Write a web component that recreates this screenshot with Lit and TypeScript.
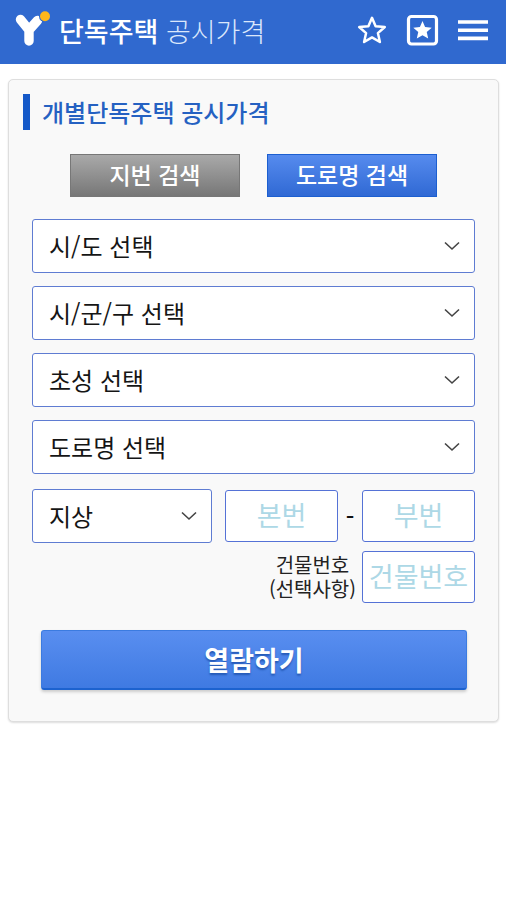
import { LitElement, html, css, svg } from "lit";
import { customElement, property } from "lit/decorators.js";

const STAR = "M15 2.8 L18.6 11.2 L27.8 12 L20.9 18.1 L22.9 27 L15 22.4 L7.1 27 L9.1 18.1 L2.2 12 L11.4 11.2 Z";

@customElement("select-box")
class SelectBox extends LitElement {
  @property() name = "";
  @property() text = "";

  static styles = css`
    :host {
      display: block;
      position: relative;
    }
    .field {
      display: block;
      box-sizing: border-box;
      width: 100%;
      height: 54px;
      margin: 0;
      padding: 0 48px 2px 16px;
      border: 1px solid #5f7cd2;
      border-radius: 3px;
      background: #fff;
      color: #151515;
      font: 400 24px "Noto Sans CJK KR", sans-serif;
      appearance: none;
    }
    .arrow {
      position: absolute;
      right: 15px;
      top: 22px;
      width: 16px;
      height: 10px;
      pointer-events: none;
    }
  `;

  render() {
    return html`
      <select class="field" aria-label=${this.name}>
        <option>${this.text}</option>
      </select>
      <svg class="arrow" viewBox="0 0 16 10" fill="none" stroke="#444" stroke-width="1.6">
        <path d="M1 1.5 L8 8 L15 1.5" />
      </svg>
    `;
  }
}

@customElement("app-root")
class AppRoot extends LitElement {
  static styles = css`
    :host {
      display: block;
      min-height: 100vh;
      background: #fff;
      font-family: "Noto Sans CJK KR", sans-serif;
    }
    .bar {
      display: flex;
      align-items: center;
      box-sizing: border-box;
      height: 64px;
      padding: 0 15px 2px;
      background: #3069cf;
      color: #fff;
    }
    .logo {
      width: 36px;
      height: 40px;
      margin-right: 8px;
    }
    .brand {
      flex: 1;
      margin: 0;
      font-size: 27px;
      line-height: 40px;
      font-weight: 500;
      white-space: nowrap;
    }
    .light {
      font-weight: 300;
      color: #dbe7fb;
    }
    .actions {
      display: flex;
      gap: 16px;
    }
    .icon {
      width: 35px;
      height: 34px;
      padding: 0;
      border: 0;
      background: none;
      color: #fff;
    }
    .icon svg {
      display: block;
      width: 34px;
      height: 34px;
    }
    .card {
      margin: 15px 7px 0 8px;
      padding: 14px 23px 31px;
      border: 1px solid #dedede;
      border-radius: 5px;
      background: #f9f9f9;
      box-shadow: 0 1px 2px #ddd;
    }
    .title {
      display: flex;
      align-items: center;
      margin: 0 0 24px -9px;
      color: #2561c2;
      font-size: 24px;
      font-weight: 500;
      line-height: 36px;
      white-space: nowrap;
    }
    .title::before {
      content: "";
      width: 7px;
      height: 36px;
      margin-right: 12px;
      background: #1559c8;
    }
    .tabs {
      display: flex;
      gap: 27px;
      margin: 0 38px 22px;
    }
    .tab {
      flex: 1;
      height: 43px;
      padding: 0 0 3px;
      border: 1px solid #777;
      background: linear-gradient(#a9a9a9, #777);
      color: #fff;
      font: 500 23px "Noto Sans CJK KR", sans-serif;
      white-space: nowrap;
    }
    .tab.on {
      border-color: #1c5fd0;
      background: linear-gradient(#568bee, #3069d4);
    }
    .selects {
      display: grid;
      gap: 13px;
      margin-bottom: 15px;
    }
    .numbers {
      display: grid;
      grid-template-columns: 180fr 13px 113fr 24px 113fr;
      row-gap: 8px;
      align-items: center;
    }
    .main {
      grid-column: 3;
    }
    .dash {
      text-align: center;
      font-size: 24px;
      font-weight: 500;
      line-height: 32px;
      color: #111;
    }
    .note {
      grid-column: 1 / 5;
      justify-self: end;
      margin-right: 6px;
      color: #222;
      font-size: 20px;
      line-height: 24px;
      text-align: center;
    }
    .num {
      box-sizing: border-box;
      width: 100%;
      min-width: 0;
      height: 52px;
      margin: 0;
      padding: 0 0 3px;
      border: 1px solid #5572d6;
      border-radius: 3px;
      background: #fff;
      color: #151515;
      font: 400 27px "Noto Sans CJK KR", sans-serif;
      text-align: center;
    }
    .num::placeholder {
      color: #add8e6;
      opacity: 1;
    }
    .submit {
      display: block;
      width: calc(100% - 17px);
      height: 60px;
      margin: 27px 8px 0 9px;
      padding: 0;
      border: 1px solid #3b7be0;
      border-bottom: 2px solid #1c62cf;
      border-radius: 3px;
      background: linear-gradient(#598ef0, #3f7ae2);
      box-shadow: 0 2px 3px #ccc;
      color: #fff;
      font: 700 27px "Noto Sans CJK KR", sans-serif;
      text-shadow: 0 2px 2px #2459b5;
    }
  `;

  private choices = ["시/도", "시/군/구", "초성", "도로명"];

  render() {
    const star = svg`<path d=${STAR} />`;
    return html`
      <header class="bar" lang="ko">
        <svg class="logo" viewBox="0 0 36 40" fill="none" stroke="#fff" stroke-linecap="round" stroke-linejoin="round">
          <path d="M5.5 8.5 L14 19 L22.5 9.5 M14 18 V30" stroke-width="9.4" />
          <circle cx="30" cy="5.2" r="6" fill="#3069cf" stroke="none" />
          <circle cx="30" cy="5.2" r="5" fill="#fdb71c" stroke="none" />
        </svg>
        <h1 class="brand">단독주택 <span class="light">공시가격</span></h1>
        <div class="actions">
          <button class="icon" aria-label="즐겨찾기">
            <svg viewBox="0 0 34 34" fill="none" stroke="currentColor" stroke-width="2.5" stroke-linejoin="round">
              <g transform="translate(3 1)">${star}</g>
            </svg>
          </button>
          <button class="icon" aria-label="즐겨찾기 목록">
            <svg viewBox="0 0 34 34" fill="currentColor">
              <rect x="3.5" y="2.5" width="28" height="27.5" rx="3" fill="none" stroke="currentColor" stroke-width="3.2" />
              <g transform="translate(6.7 5) scale(.72)">${star}</g>
            </svg>
          </button>
          <button class="icon" aria-label="메뉴">
            <svg viewBox="0 0 34 34" stroke="currentColor" stroke-width="3.6">
              <path d="M2 8 H32 M2 16.2 H32 M2 24.4 H32" />
            </svg>
          </button>
        </div>
      </header>
      <main class="card" lang="ko">
        <h2 class="title">개별단독주택 공시가격</h2>
        <div class="tabs">
          <button class="tab">지번 검색</button>
          <button class="tab on">도로명 검색</button>
        </div>
        <div class="selects">
          ${this.choices.map((c) => html`<select-box name=${c} text=${c + " 선택"}></select-box>`)}
        </div>
        <div class="numbers">
          <select-box name="지상/지하" text="지상"></select-box>
          <input class="num main" aria-label="본번" placeholder="본번" />
          <span class="dash">-</span>
          <input class="num" aria-label="부번" placeholder="부번" />
          <label class="note" for="building">건물번호<br />(선택사항)</label>
          <input class="num" id="building" placeholder="건물번호" />
        </div>
        <button class="submit">열람하기</button>
      </main>
    `;
  }
}
